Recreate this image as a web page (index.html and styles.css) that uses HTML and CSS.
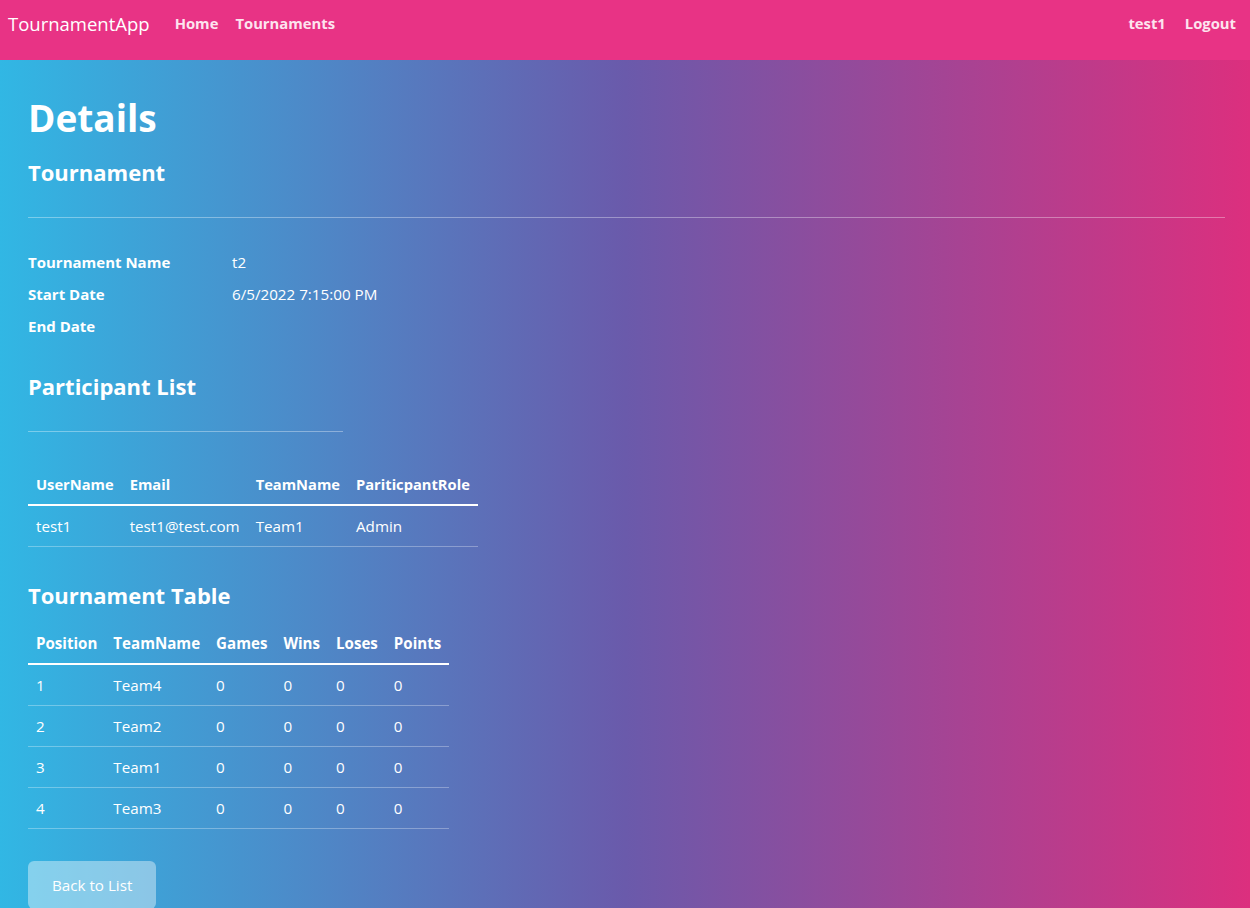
FILE: index.html
```html
<!DOCTYPE html>
<html>
<head>
<meta charset="utf-8">
<title>Details</title>
<link rel="stylesheet" href="styles.css">
</head>
<body>
<header class="navbar">
  <div class="nav-left">
    <span class="brand">TournamentApp</span>
    <a class="nav-link">Home</a>
    <a class="nav-link">Tournaments</a>
  </div>
  <div class="nav-right">
    <a class="nav-link">test1</a>
    <a class="nav-link">Logout</a>
  </div>
</header>
<main class="content">
  <h1 class="title">Details</h1>
  <h4 class="subtitle">Tournament</h4>
  <hr class="rule">
  <dl class="details">
    <dt>Tournament Name</dt><dd>t2</dd>
    <dt>Start Date</dt><dd>6/5/2022 7:15:00 PM</dd>
    <dt>End Date</dt><dd></dd>
  </dl>
  <h4 class="section">Participant List</h4>
  <hr class="rule short">
  <table class="table">
    <thead>
      <tr><th>UserName</th><th>Email</th><th>TeamName</th><th>PariticpantRole</th></tr>
    </thead>
    <tbody>
      <tr><td>test1</td><td>test1@test.com</td><td>Team1</td><td>Admin</td></tr>
    </tbody>
  </table>
  <h4 class="section table-title">Tournament Table</h4>
  <table class="table standings">
    <thead>
      <tr><th>Position</th><th>TeamName</th><th>Games</th><th>Wins</th><th>Loses</th><th>Points</th></tr>
    </thead>
    <tbody>
      <tr><td>1</td><td>Team4</td><td>0</td><td>0</td><td>0</td><td>0</td></tr>
      <tr><td>2</td><td>Team2</td><td>0</td><td>0</td><td>0</td><td>0</td></tr>
      <tr><td>3</td><td>Team1</td><td>0</td><td>0</td><td>0</td><td>0</td></tr>
      <tr><td>4</td><td>Team3</td><td>0</td><td>0</td><td>0</td><td>0</td></tr>
    </tbody>
  </table>
  <div class="actions">
    <a class="btn">Back to List</a>
  </div>
</main>
</body>
</html>
```
FILE: styles.css
```css
html, body {
  margin: 0;
  padding: 0;
}
body {
  min-height: 908px;
  font-family: "Open Sans", "Noto Sans", sans-serif;
  font-size: 15.2px;
  color: #fff;
  background: linear-gradient(90deg, #31b7e4 0%, #6a5aab 50%, #dc2f7e 100%);
}
.navbar {
  height: 60px;
  background: #e83385;
  display: flex;
  justify-content: space-between;
  align-items: flex-start;
  padding: 0 10px 0 8px;
}
.nav-left, .nav-right {
  display: flex;
  height: 46px;
  align-items: center;
}
.brand {
  font-size: 18.5px;
  color: #fff;
  margin-right: 21px;
}
.nav-link {
  font-weight: 700;
  font-size: 14.8px;
  color: #fde4ef;
  padding: 0 4px;
  margin-right: 9px;
}
.nav-right .nav-link { margin-right: 0; margin-left: 11px; }
.content {
  padding: 28px 25px 0 28px;
}
.title {
  margin: 0;
  font-size: 37px;
  font-weight: 700;
  line-height: 60px;
}
.subtitle, .section {
  margin: 0;
  font-size: 22px;
  font-weight: 700;
  line-height: 32px;
}
.subtitle { margin-top: 8px; }
.rule {
  border: 0;
  border-top: 1px solid rgba(255,255,255,0.35);
  margin: 29px 0 0;
}
.rule.short { width: 315px; margin-top: 29px; }
.details {
  display: grid;
  grid-template-columns: 204px 1fr;
  margin: 28px 0 0;
  row-gap: 0;
}
.details dt, .details dd {
  margin: 0;
  line-height: 32px;
  height: 32px;
}
.details dt { font-weight: 700; font-size: 15px; }
.details dd { font-size: 15.2px; }
.section { margin-top: 28px; }
.table {
  border-collapse: collapse;
  margin-top: 32px;
}
.table th, .table td {
  text-align: left;
  padding: 0 8px;
  height: 40px;
  white-space: nowrap;
}
.table th { font-weight: 700; font-size: 14.7px; }
.standings th { font-size: 15.1px; }
.table thead tr { border-bottom: 2px solid #fff; }
.table tbody tr { border-bottom: 1px solid rgba(255,255,255,0.3); }
.section.table-title { margin-top: 32px; }
.table-title + .table { margin-top: 12px; }
.actions { margin-top: 32px; }
.btn {
  display: inline-block;
  padding: 0 24px;
  line-height: 48px;
  border-radius: 6px;
  background: rgba(255,255,255,0.4);
  color: #fff;
  font-size: 15.2px;
}
```
